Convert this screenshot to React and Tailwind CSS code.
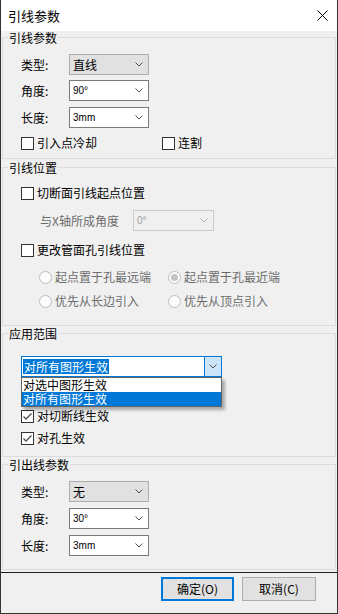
function Chevron({ color = "#505050" }) {
  return (
    <svg width="8" height="5" viewBox="0 0 8 5" className="shrink-0">
      <polyline points="0.5,0.5 4,4 7.5,0.5" fill="none" stroke={color} strokeWidth="1" />
    </svg>
  )
}

function Select({ value, tone = "white", width = "w-[80px]" }) {
  const styles = {
    white: "bg-white border-[#7a7a7a] text-black",
    gray: "bg-[#e1e1e1] border-[#adadad] text-black",
    disabled: "bg-[#f0f0f0] border-[#cccccc] text-[#a0a0a0]",
  }
  const latin = /^[0-9]/.test(value)
  return (
    <div className={`${width} h-[21px] border ${styles[tone]} flex items-center justify-between pl-[3px] pr-[5px]`}>
      <span className={latin ? "font-['Liberation_Sans',sans-serif] text-[10px] leading-[19px]" : "text-[12px] leading-[19px]"}>
        {value}
      </span>
      <Chevron color={tone === "disabled" ? "#b0b0b0" : "#505050"} />
    </div>
  )
}

function Checkbox({ label, checked }) {
  return (
    <div className="flex items-center h-[14px] gap-[3px]">
      <span className="w-[13px] h-[13px] border border-[#333333] bg-white flex items-center justify-center">
        {checked && (
          <svg width="11" height="11" viewBox="0 0 11 11">
            <polyline points="1.5,5.5 4,8 9.5,2.5" fill="none" stroke="#505050" strokeWidth="1.3" />
          </svg>
        )}
      </span>
      <span className="text-[12px] leading-[14px]">{label}</span>
    </div>
  )
}

function Radio({ label, checked }) {
  return (
    <div className="flex items-center h-[14px] gap-[3px] w-[129px]">
      <span className="w-[13px] h-[13px] rounded-full border border-[#bcbcbc] bg-[#fcfcfc] flex items-center justify-center">
        {checked && <span className="w-[7px] h-[7px] rounded-full bg-[#c4c4c4]" />}
      </span>
      <span className="text-[12px] leading-[14px] text-[#6d6d6d]">{label}</span>
    </div>
  )
}

function Group({ title, className, children }) {
  return (
    <div className={`mx-px border border-[#dcdcdc] ${className}`}>
      <div className="-mt-[7px] ml-[5px] px-px w-fit bg-[#f0f0f0] text-[12px] leading-[14px]">{title}</div>
      {children}
    </div>
  )
}

function Field({ label, children, className = "" }) {
  return (
    <div className={`flex items-center pl-[18px] ${className}`}>
      <span className="w-[48px] text-[12px] leading-[14px]">{label}</span>
      {children}
    </div>
  )
}

export default function App() {
  return (
    <div className="w-[338px] h-[614px] flex flex-col border-x border-b border-[#333333] bg-[#f0f0f0] text-black font-['Noto_Sans_CJK_SC',sans-serif] overflow-hidden">
      <div className="h-[31px] shrink-0 bg-white flex items-center justify-between pl-[7px] pr-[9px]">
        <span className="text-[13px] leading-[16px]">引线参数</span>
        <svg width="11" height="11" viewBox="0 0 11 11">
          <path d="M0.5 0.5 L10.5 10.5 M10.5 0.5 L0.5 10.5" stroke="#000" strokeWidth="1" />
        </svg>
      </div>

      <Group title="引线参数" className="mt-[6px] h-[122px]">
        <Field label="类型:" className="mt-[9px]">
          <Select value="直线" tone="gray" />
        </Field>
        <Field label="角度:" className="mt-[5px]">
          <Select value="90°" />
        </Field>
        <Field label="长度:" className="mt-[6px]">
          <Select value="3mm" />
        </Field>
        <div className="flex pl-[18px] mt-[8px]">
          <div className="w-[141px]">
            <Checkbox label="引入点冷却" />
          </div>
          <Checkbox label="连割" />
        </div>
      </Group>

      <Group title="引线位置" className="mt-[8px] h-[159px]">
        <div className="pl-[18px] mt-[11px]">
          <Checkbox label="切断面引线起点位置" />
        </div>
        <div className="flex items-center pl-[37px] mt-[10px]">
          <span className="w-[93px] text-[12px] leading-[14px] text-[#6d6d6d]">与X轴所成角度</span>
          <Select value="0°" tone="disabled" width="w-[81px]" />
        </div>
        <div className="pl-[18px] mt-[12px]">
          <Checkbox label="更改管面孔引线位置" />
        </div>
        <div className="flex pl-[36px] mt-[13px]">
          <Radio label="起点置于孔最远端" />
          <Radio label="起点置于孔最近端" checked />
        </div>
        <div className="flex pl-[36px] mt-[10px]">
          <Radio label="优先从长边引入" />
          <Radio label="优先从顶点引入" />
        </div>
      </Group>

      <Group title="应用范围" className="mt-[7px] h-[124px]">
        <div className="relative ml-[18px] mt-[15px] w-[201px]">
          <div className="h-[21px] border border-[#0078d7] bg-white flex items-center justify-between pl-px">
            <span className="bg-[#0078d7] text-white text-[12px] leading-[15px] px-px">对所有图形生效</span>
            <span className="w-[17px] h-[19px] bg-[#cce4f7] border-l border-[#0078d7] flex items-center justify-center">
              <Chevron />
            </span>
          </div>
          <div className="absolute left-0 top-full w-[201px] border border-[#646464] bg-white shadow-[3px_3px_3px_rgba(0,0,0,0.3)] z-10">
            <div className="h-[14px] text-[12px] leading-[14px] px-px">对选中图形生效</div>
            <div className="h-[14px] text-[12px] leading-[14px] px-px bg-[#0078d7] text-white">对所有图形生效</div>
          </div>
        </div>
        <div className="pl-[18px] mt-[10px] flex flex-col gap-[8px]">
          {/* row hidden under the open list */}
          <div className="h-[14px]" />
          <Checkbox label="对切断线生效" checked />
          <Checkbox label="对孔生效" checked />
        </div>
      </Group>

      <Group title="引出线参数" className="mt-[7px] h-[106px]">
        <Field label="类型:" className="mt-[9px]">
          <Select value="无" tone="gray" />
        </Field>
        <Field label="角度:" className="mt-[6px]">
          <Select value="30°" />
        </Field>
        <Field label="长度:" className="mt-[6px]">
          <Select value="3mm" />
        </Field>
      </Group>

      <div className="mt-[2px] h-px bg-[#1e1e1e]" />

      <div className="flex justify-end gap-[8px] pr-[21px] mt-[4px]">
        <button className="w-[73px] h-[24px] border-2 border-[#0078d7] bg-[#e1e1e1] text-[12px] leading-[14px]">确定(O)</button>
        <button className="w-[74px] h-[24px] border border-[#adadad] bg-[#e1e1e1] text-[12px] leading-[14px]">取消(C)</button>
      </div>
    </div>
  )
}
